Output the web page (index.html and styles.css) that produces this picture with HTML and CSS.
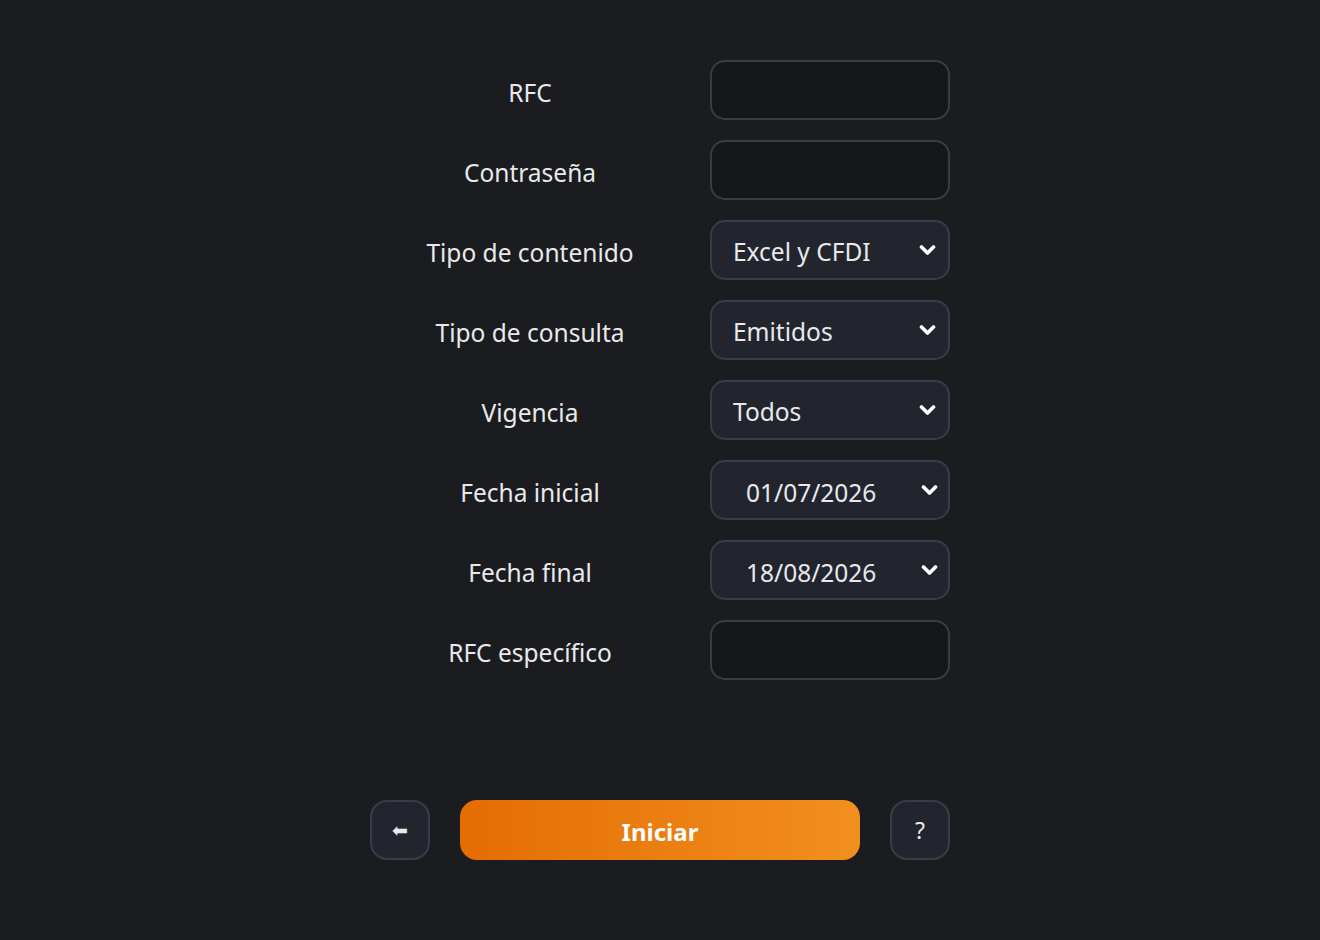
FILE: index.html
```html
<!DOCTYPE html>
<html lang="es">
<head>
<meta charset="utf-8">
<link rel="stylesheet" href="styles.css">
</head>
<body>
<main class="page">
  <form class="form">
    <label class="label">RFC</label>
    <div class="field field-text"></div>

    <label class="label">Contraseña</label>
    <div class="field field-text"></div>

    <label class="label">Tipo de contenido</label>
    <div class="field field-select"><span class="value">Excel y CFDI</span><svg class="chev" viewBox="0 0 14 10"><path d="M2 2.5 L7 7.5 L12 2.5"/></svg></div>

    <label class="label">Tipo de consulta</label>
    <div class="field field-select"><span class="value">Emitidos</span><svg class="chev" viewBox="0 0 14 10"><path d="M2 2.5 L7 7.5 L12 2.5"/></svg></div>

    <label class="label">Vigencia</label>
    <div class="field field-select"><span class="value">Todos</span><svg class="chev" viewBox="0 0 14 10"><path d="M2 2.5 L7 7.5 L12 2.5"/></svg></div>

    <label class="label">Fecha inicial</label>
    <div class="field field-select field-date"><span class="value">01/07/2026</span><svg class="chev" viewBox="0 0 14 10"><path d="M2 2.5 L7 7.5 L12 2.5"/></svg></div>

    <label class="label">Fecha final</label>
    <div class="field field-select field-date"><span class="value">18/08/2026</span><svg class="chev" viewBox="0 0 14 10"><path d="M2 2.5 L7 7.5 L12 2.5"/></svg></div>

    <label class="label">RFC específico</label>
    <div class="field field-text"></div>
  </form>

  <div class="actions">
    <button class="btn-square" type="button"><span class="arrow">⬅</span></button>
    <button class="btn-primary" type="button">Iniciar</button>
    <button class="btn-square" type="button">?</button>
  </div>
</main>
</body>
</html>
```

FILE: styles.css
```css
* { box-sizing: border-box; }
html, body {
  margin: 0;
  height: 100%;
  background: #1b1c20;
  color: #e6e7ea;
  font-family: "Noto Sans", "Open Sans", sans-serif;
}
.page {
  width: 580px;
  margin: 0 auto;
  padding-top: 60px;
}
.form {
  display: grid;
  grid-template-columns: 320px 240px;
  column-gap: 20px;
  row-gap: 20px;
  align-items: center;
}
.label {
  text-align: center;
  font-size: 24.5px;
  line-height: 60px;
  padding-top: 3px;
  height: 60px;
  color: #e8e9ec;
}
.field {
  height: 60px;
  border: 2px solid #393c47;
  border-radius: 15px;
  background: #16171b;
}
.field-select {
  background: #22252e;
  display: flex;
  align-items: center;
  padding: 0 12px 0 21px;
  font-size: 24.5px;
  color: #e8e9ec;
}
.field-select .value { flex: 1; padding-top: 2px; }
.field-date .value { padding-left: 13px; padding-top: 4px; }
.chev {
  width: 17px;
  height: 12px;
  fill: none;
  stroke: #ffffff;
  stroke-width: 3;
  stroke-linecap: round;
  stroke-linejoin: round;
  margin-top: 0px;
}
.field-date .chev { margin-top: -1px; margin-right: -2px; }
.actions {
  margin-top: 120px;
  display: flex;
  gap: 30px;
}
.btn-square {
  width: 60px;
  height: 60px;
  border: 2px solid #393c47;
  border-radius: 17px;
  background: #22252e;
  color: #e8e9ec;
  font-family: inherit;
  font-size: 23px;
  padding: 0;
  display: flex;
  align-items: center;
  justify-content: center;
}
.arrow { font-size: 19px; font-family: "DejaVu Sans", sans-serif; }
.btn-primary {
  width: 400px;
  height: 60px;
  border: none;
  border-radius: 17px;
  background: linear-gradient(90deg, #e46d03 0%, #f28f1f 100%);
  color: #ffffff;
  font-family: inherit;
  font-weight: 700;
  font-size: 24px;
  padding: 2px 0 0;
}
```
